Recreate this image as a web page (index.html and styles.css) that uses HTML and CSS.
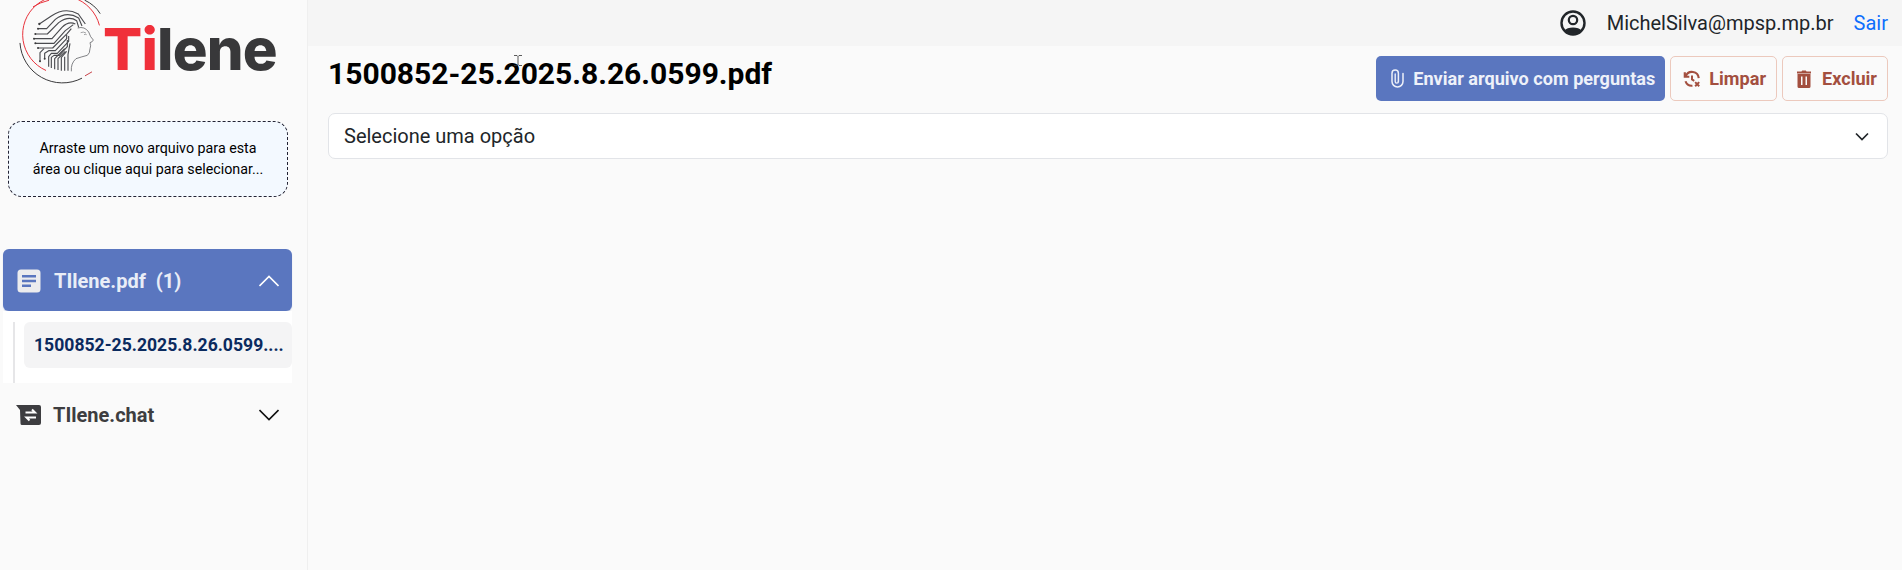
FILE: index.html
```html
<!DOCTYPE html>
<html lang="pt-BR">
<head>
<meta charset="utf-8">
<title>Tilene</title>
<link rel="stylesheet" href="styles.css">
</head>
<body>
<div class="app">
  <aside class="sidebar">
    <div class="logo">
      <svg class="logo-mark" viewBox="0 0 360 270" fill="none">
        <g stroke-linecap="round">
          <path d="M107 211A117 117 0 1 1 268 75" stroke="#e8333c" stroke-width="3"/>
          <path d="M30 130A127 127 0 0 0 215 235" stroke="#3a3a3c" stroke-width="3"/>
          <path d="M225 1Q255 15 270 40" stroke="#3a3a3c" stroke-width="3"/>
          <path d="M70 20Q90 7 116 1" stroke="#e8333c" stroke-width="3"/>
          <path d="M226 227L245 216" stroke="#c9444a" stroke-width="3"/>
        </g>
        <g stroke="#4a4b4f" stroke-width="3.400" stroke-linejoin="round">
          <path d="M88 72L124 48Q165 20 205 42L226 72"/>
          <path d="M84 86H110L136 58Q170 32 206 54L216 78"/>
          <path d="M76 102H112L146 68Q176 46 200 62L206 82"/>
          <path d="M72 116H126L156 82Q176 62 196 72"/>
          <path d="M76 130H132L166 92L190 74"/>
          <path d="M84 144H128L172 100L184 86"/>
          <path d="M90 184V158L102 146"/>
          <path d="M104 176V160L116 152H136L170 116V104"/>
          <path d="M116 200V170L124 160H142L176 124V108"/>
          <path d="M124 204V172L132 166H148L172 140V120"/>
          <path d="M134 208V176L164 146"/>
          <path d="M144 210V176L166 154"/>
          <path d="M154 212V172L170 154"/>
          <path d="M164 212V170"/>
          <path d="M174 212V164L180 130"/>
        </g>
        <g fill="#3a3a3c">
          <circle cx="88" cy="72" r="3.500"/><circle cx="84" cy="86" r="3"/><circle cx="76" cy="102" r="3"/>
          <circle cx="72" cy="116" r="3"/><circle cx="76" cy="130" r="3"/><circle cx="84" cy="144" r="3"/>
          <circle cx="90" cy="184" r="3"/><circle cx="104" cy="176" r="3"/>
        </g>
        <path d="M203 84Q224 78 236 96L242 110L250 120Q248 126 240 128Q244 138 240 146Q240 160 232 166Q216 170 198 176Q182 190 184 214" stroke="#55565a" stroke-width="2.200"/>
        <path d="M212 98Q220 94 228 99M222 104Q226 102 230 104" stroke="#77787c" stroke-width="2"/>
      </svg>
      <span class="logo-text"><span class="logo-red">Ti</span>lene</span>
    </div>

    <div class="dropzone">Arraste um novo arquivo para esta<br>área ou clique aqui para selecionar...</div>

    <nav class="menu">
      <div class="menu-head menu-head-active">
        <svg class="menu-icon" viewBox="0 0 24 24"><rect x="0.500" y="0.500" width="23" height="23" rx="3.500" fill="#ececee"/><path d="M5 6h14v2.400H5zM5 10.800h14v2.400H5zM5 15.600h9v2.400H5z" fill="#5a76bf"/></svg>
        <span class="menu-label">TIlene.pdf&nbsp; (1)</span>
        <svg class="chev" viewBox="0 0 20 12" fill="none"><path d="M0.500 11L10 1.500L19.500 11" stroke="#fff" stroke-width="1.600"/></svg>
      </div>
      <div class="submenu">
        <div class="submenu-item">1500852-25.2025.8.26.0599....</div>
      </div>
      <div class="menu-head">
        <svg class="menu-icon menu-icon-chat" viewBox="0 0 25 20"><path d="M0 0H23A2 2 0 0 1 25 2V18A2 2 0 0 1 23 20H6A1.500 1.500 0 0 1 4.500 18.500L4 5Z" fill="#3d3d40"/><path d="M9.500 7.500H19L16 4.500" stroke="#fff" stroke-width="2" fill="none"/><path d="M20 12.500H10.500L13.500 15.500" stroke="#fff" stroke-width="2" fill="none"/></svg>
        <span class="menu-label">TIlene.chat</span>
        <svg class="chev" viewBox="0 0 20 12" fill="none"><path d="M0.500 1L10 10.500L19.500 1" stroke="#111" stroke-width="1.600"/></svg>
      </div>
    </nav>
  </aside>

  <div class="main">
    <header class="topbar">
      <svg class="user-icon" viewBox="0 0 26 26"><circle cx="13" cy="13" r="11.500" fill="none" stroke="#212529" stroke-width="2.400"/><circle cx="13" cy="10" r="4.200" fill="none" stroke="#212529" stroke-width="2.200"/><path d="M4.500 20.500C7 16.500 19 16.500 21.500 20.500A12 12 0 0 1 4.500 20.500Z" fill="#212529"/></svg>
      <span class="user-mail">MichelSilva@mpsp.mp.br</span>
      <a class="logout" href="#">Sair</a>
    </header>
    <section class="content">
      <div class="title-row">
        <h1 class="doc-title">1500852-25.2025.8.26.0599.pdf</h1>
        <div class="actions">
          <button class="btn btn-primary">
            <svg class="icon-clip" viewBox="0 0 13 19" fill="none"><path d="M12 4.500V12.500A5.500 5.500 0 0 1 1 12.500V4.200A3.200 3.200 0 0 1 7.400 4.200V12.500" stroke="#eef1f9" stroke-width="1.500" stroke-linecap="round"/><path d="M4.200 5V12.500A1.600 1.600 0 0 0 7.400 12.500" stroke="#eef1f9" stroke-width="1.400" stroke-linecap="round"/></svg>
            Enviar arquivo com perguntas
          </button>
          <button class="btn btn-outline btn-clear">
            <svg class="icon-clear" viewBox="0 0 20 20" fill="none"><path d="M3 7A7.500 7.500 0 0 1 17.500 9M2 2.500V7.500H7" stroke="#a34f3f" stroke-width="2.400"/><path d="M2.800 12.500A7.500 7.500 0 0 0 10.500 17.500" stroke="#a34f3f" stroke-width="2.400"/><path d="M10 6V10.500L12.500 12M13.500 13.500L18 18M18 13.500L13.500 18" stroke="#a34f3f" stroke-width="2.200"/></svg>
            Limpar
          </button>
          <button class="btn btn-outline btn-delete">
            <svg class="icon-trash" viewBox="0 0 16 18"><path d="M1 1.500H5.500L6.200 0.500H9.800L10.500 1.500H15V3.500H1ZM1.500 4H14.500V16.500A1.500 1.500 0 0 1 13 18H3A1.500 1.500 0 0 1 1.500 16.500ZM5 6.500V15H6.500V6.500ZM9.500 6.500V15H11V6.500Z" fill="#a34f3f" fill-rule="evenodd"/></svg>
            Excluir
          </button>
        </div>
      </div>
      <div class="select">
        <span>Selecione uma opção</span>
        <svg class="select-chev" viewBox="0 0 14 9" fill="none"><path d="M1 1.500L7 7.500L13 1.500" stroke="#212529" stroke-width="1.700"/></svg>
      </div>
    </section>
    <svg class="text-cursor" viewBox="0 0 8 11" fill="none"><path d="M0 0.500H3L4 1.500L5 0.500H8M4 1.500V9.500M0 10.500H3L4 9.500L5 10.500H8" stroke="#333" stroke-width="0.800"/></svg>
  </div>
</div>
</body>
</html>
```
FILE: styles.css
```css
* { box-sizing: border-box; }
html, body { margin: 0; height: 100%; }
body { font-family: Roboto, "Liberation Sans", sans-serif; background: #fafafa; color: #212529; overflow: hidden; }
.app { display: flex; height: 570px; }

.sidebar { width: 308px; flex: none; background: #fafafa; border-right: 1px solid #efefef; padding: 0 15px 0 3px; }
.logo { display: flex; align-items: flex-start; height: 121px; margin-left: 7px; }
.logo-mark { width: 120px; height: 90px; flex: none; }
.logo-text { font-family: Inter, sans-serif; font-weight: 800; font-size: 58px; line-height: 1; letter-spacing: -0.800px; color: #38383a; margin: 20px 0 0 -27px; }
.logo-red { color: #f0303a; }

.dropzone { width: 280px; height: 76px; margin-left: 5px; border: 1px dashed #223; border-radius: 14px; background: #f3f9ff; color: #000; font-size: 14.250px; line-height: 21px; text-align: center; display: flex; align-items: center; justify-content: center; }

.menu { margin-top: 52px; width: 289px; }
.menu-head { height: 62px; display: flex; align-items: center; padding: 1px 13px 0 13px; border-radius: 6px; color: #3d3d40; }
.menu-head-active { background: #5a76bf; color: #e9edf7; box-shadow: 0 1px 1px #b9c4e2; }
.menu-icon { width: 24px; height: 24px; flex: none; margin: 0 13px 0 1px; }
.menu-icon-chat { width: 25px; height: 20px; margin: 0 12px 0 0; }
.menu-label { flex: 1; font-size: 20px; font-weight: 700; }
.chev { width: 20px; height: 12px; flex: none; }
.submenu { background: #fff; height: 72px; padding: 11px 0 0 21px; }
.submenu-item { height: 46px; padding-left: 10px; border-radius: 6px; background: #f4f4f5; color: #0b2a5e; font-size: 17.600px; font-weight: 700; line-height: 46px; position: relative; white-space: nowrap; }
.submenu-item::before { content: ""; position: absolute; left: -11px; top: 0; height: 61px; width: 2px; background: #e6e6e8; }

.main { flex: 1; min-width: 0; display: flex; flex-direction: column; position: relative; }
.topbar { height: 46px; flex: none; background: #f5f5f5; display: flex; align-items: center; justify-content: flex-end; padding: 0 14px 0 0; }
.user-icon { width: 26px; height: 26px; margin-right: 21px; }
.user-mail { font-size: 20px; color: #212529; margin-right: 20px; }
.logout { font-size: 20px; color: #0d6efd; text-decoration: none; }

.content { padding: 10px 14px 0 20px; }
.title-row { display: flex; justify-content: space-between; align-items: flex-start; height: 57px; }
.doc-title { margin: 0; font-size: 30px; font-weight: 700; line-height: 36px; color: #000; }
.actions { display: flex; gap: 5px; }
.btn { height: 45px; display: flex; align-items: center; padding: 0 10px; border-radius: 5px; font-family: inherit; font-size: 18.100px; font-weight: 700; border: 1px solid transparent; }
.btn-primary { background: #5a76bf; color: #eef1f9; padding: 0 9px 0 14px; gap: 9px; }
.btn-outline { background: #fafafa; color: #a34f3f; border-color: #ecc9bd; }
.btn-clear { padding-left: 12px; gap: 8px; }
.btn-delete { padding-left: 13px; gap: 10px; }
.icon-clip { width: 13px; height: 19px; flex: none; }
.icon-clear { width: 18px; height: 18px; flex: none; }
.icon-trash { width: 16px; height: 18px; flex: none; }
.select { height: 46px; display: flex; align-items: center; justify-content: space-between; padding: 0 18px 0 15px; background: #fff; border: 1px solid #e2e4e8; border-radius: 7px; font-size: 20px; color: #212529; }
.select-chev { width: 14px; height: 9px; }
.text-cursor { position: absolute; left: 206px; top: 55px; width: 8px; height: 11px; }
```
